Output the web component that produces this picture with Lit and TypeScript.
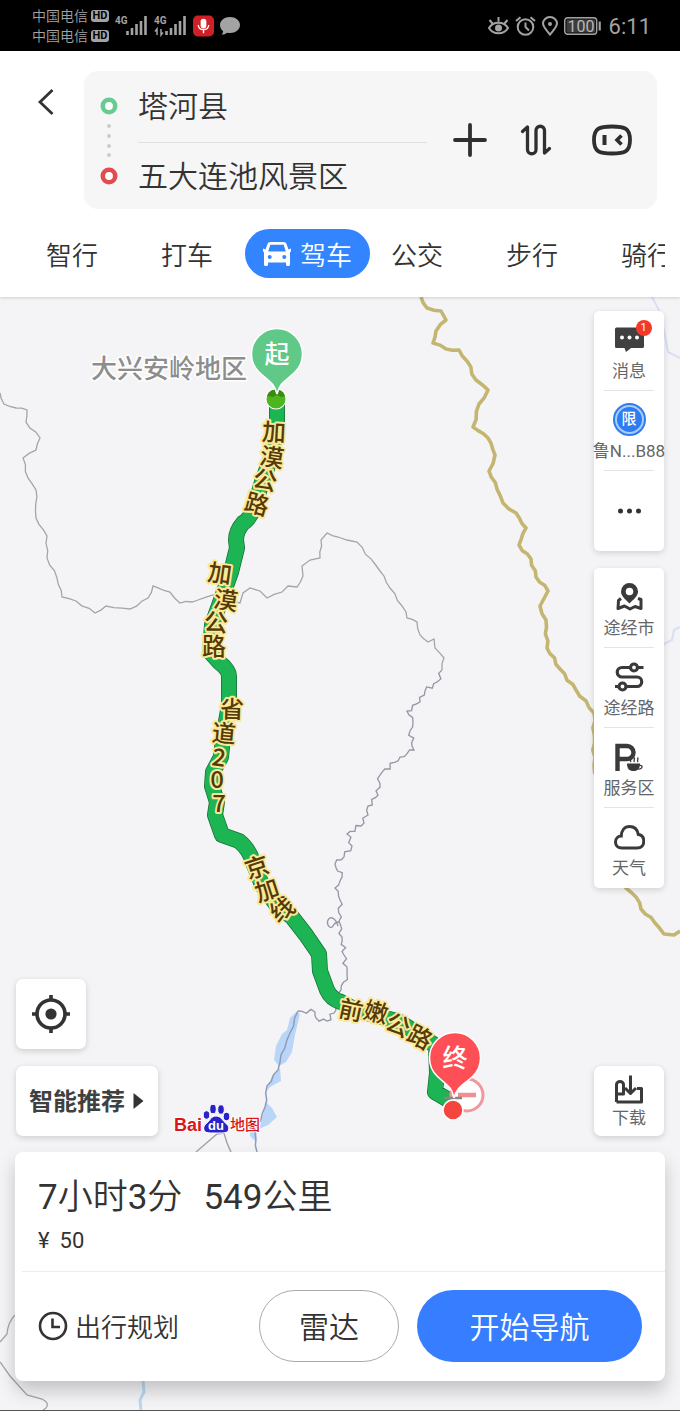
import { LitElement, html, svg, css } from "lit";
import { customElement, property, state } from "lit/decorators.js";
import { classMap } from "lit/directives/class-map.js";

type Point = [number, number];
type Glyph = [string, number, number, number];

const base = css`
  :host {
    font-family: Roboto, "Noto Sans CJK SC", sans-serif;
    color: #333;
  }
  * {
    box-sizing: border-box;
  }
  svg {
    display: block;
    flex: none;
  }
  button,
  input {
    font: inherit;
    color: inherit;
    border: 0;
    margin: 0;
    padding: 0;
    background: none;
  }
  button {
    cursor: pointer;
  }
`;

@customElement("status-bar")
class StatusBar extends LitElement {
  static styles = [
    base,
    css`
      :host {
        display: flex;
        justify-content: space-between;
        align-items: center;
        height: 51px;
        padding: 0 29px 0 32px;
        background: #000;
        color: #a3a3a3;
      }
      .side {
        display: flex;
        align-items: center;
      }
      .carrier {
        display: flex;
        align-items: center;
        gap: 3px;
        font-size: 14px;
        line-height: 20px;
        font-weight: 350;
      }
      .hd {
        background: #a3a3a3;
        color: #000;
        font-size: 11px;
        line-height: 12px;
        font-weight: 700;
        border-radius: 3px;
        width: 18px;
        text-align: center;
      }
      .time {
        font-size: 22px;
        line-height: 26px;
        padding-top: 2px;
        margin-left: 6px;
      }
      .gap {
        margin-left: 6px;
      }
      .tiny {
        font: 700 10px Roboto, sans-serif;
      }
      .level {
        font: 400 16px Roboto, sans-serif;
      }
    `,
  ];

  signal(data: boolean) {
    return svg`
      <text class="tiny" x="0" y="9" fill="#a3a3a3">4G</text>
      ${data ? svg`<path d="M3 20v-6l-2 2.500M7 14v6l2-2.500" fill="none" stroke="#a3a3a3" stroke-width="1.500"/>` : ""}
      <path d="M12.500 20v-4M17 20v-7M21.500 20v-11M26 20v-14M30.500 20V1" stroke="#a3a3a3" stroke-width="2.600"/>`;
  }

  render() {
    return html`
      <div class="side">
        <div>
          <div class="carrier">中国电信<span class="hd">HD</span></div>
          <div class="carrier">中国电信<span class="hd">HD</span></div>
        </div>
        <svg class="gap" width="33" height="22" viewBox="0 0 33 22">${this.signal(false)}</svg>
        <svg class="gap" width="33" height="22" viewBox="0 0 33 22">${this.signal(true)}</svg>
        <svg class="gap" width="21" height="22" viewBox="0 0 22 22">
          <rect width="22" height="22" rx="5" fill="#cf2027" />
          <rect x="8" y="3.500" width="6" height="10" rx="3" fill="#fff" />
          <path d="M5.500 10c.5 6.500 10.500 6.500 11 0M11 15v3.500" fill="none" stroke="#fff" stroke-width="1.400" />
        </svg>
        <svg class="gap" width="20" height="20" viewBox="0 0 20 20">
          <path d="M10 1c5.500 0 10 3.300 10 8s-4.500 8-10 8c-1 0-2 0-2.800-.3C5.600 18 3.500 18.500 1.600 18.500c1-1 1.500-2 1.500-3.400C1.200 13.700 0 11.500 0 9c0-4.700 4.500-8 10-8z" fill="#a3a3a3" />
        </svg>
      </div>
      <div class="side">
        <svg width="21" height="20" viewBox="0 0 21 20" fill="none" stroke="#a3a3a3" stroke-width="2">
          <path d="M1 12c4-7 15-7 19 0-4 7-15 7-19 0zM10.500 1v4.500M4.500 7.500l-3-3.500M16.500 7.500l3-3.500" />
          <circle cx="10.500" cy="12" r="3.500" fill="#a3a3a3" stroke="none" />
        </svg>
        <svg class="gap" width="21" height="20" viewBox="0 0 21 20" fill="none" stroke="#a3a3a3" stroke-width="2">
          <circle cx="10.500" cy="11" r="7.800" />
          <path d="M10.500 6.500V11l3.500 3.500M1 5l4.500-3.800M20 5l-4.500-3.800" />
        </svg>
        <svg class="gap" width="16" height="20" viewBox="0 0 16 20" fill="none" stroke="#a3a3a3" stroke-width="2">
          <path d="M8 18.500C3.500 13 1 10.500 1 7.500a7 6.500 0 0 1 14 0c0 3-2.500 5.500-7 11z" />
          <circle cx="8" cy="8" r="2" fill="#a3a3a3" stroke="none" />
        </svg>
        <svg class="gap" width="39" height="18" viewBox="0 0 39 18">
          <rect x=".7" y=".7" width="32" height="16.600" rx="3" fill="#111" stroke="#a3a3a3" stroke-width="1.400" />
          <rect x="2.500" y="2.500" width="28.500" height="13" rx="1" fill="#3c3c3c" />
          <text class="level" x="3.500" y="14.700" fill="#b8b8b8">100</text>
          <path d="M35.700 4.500v9" stroke="#a3a3a3" stroke-width="2.200" />
        </svg>
        <span class="time">6:11</span>
      </div>
    `;
  }
}

@customElement("route-header")
class RouteHeader extends LitElement {
  @state() mode = "驾车";

  static styles = [
    base,
    css`
      :host {
        display: block;
        position: relative;
        background: #fff;
        padding-top: 20px;
        box-shadow: 0 1px 3px rgba(0, 0, 0, 0.15);
      }
      .top {
        display: flex;
        align-items: flex-start;
        padding-right: 23px;
      }
      .back {
        width: 84px;
        padding: 17px 0 0 37px;
      }
      .box {
        flex: 1;
        min-width: 0;
        display: flex;
        align-items: center;
        background: #f6f6f6;
        border-radius: 14px;
        height: 138px;
        padding: 0 24px 0 15px;
      }
      .track {
        margin-right: 19px;
      }
      .stops {
        flex: 1;
        min-width: 0;
        align-self: flex-start;
        padding-top: 2px;
      }
      .stops input {
        display: block;
        width: 100%;
        height: 62px;
        font-size: 30px;
        font-weight: 350;
        outline: none;
      }
      .line {
        height: 1px;
        margin-top: 7px;
        background: #e0e0e0;
      }
      .icons {
        display: flex;
        align-items: center;
        margin-left: 26px;
      }
      .icons button + button {
        margin-left: 32px;
      }
      .icons button:last-child {
        margin-left: 38px;
      }
      nav {
        display: flex;
        margin: 20px 15px 0;
        overflow: hidden;
        padding-bottom: 19px;
      }
      .tab {
        flex: none;
        display: flex;
        align-items: center;
        gap: 9px;
        height: 49px;
        padding: 0 32px 0 31px;
        font-size: 26px;
        font-weight: 350;
      }
      .tab.on {
        background: #3385ff;
        color: #fff;
        border-radius: 25px;
        padding: 0 18px;
        margin-right: -10px;
      }
    `,
  ];

  render() {
    return html`
      <div class="top">
        <button class="back" aria-label="返回">
          <svg width="18" height="28" viewBox="0 0 18 28">
            <path d="M15.500 2L3 14l12.500 12" fill="none" stroke="#333" stroke-width="2.800" />
          </svg>
        </button>
        <div class="box">
          <svg class="track" width="20" height="90" viewBox="0 0 20 90" fill="none">
            <circle cx="10" cy="11" r="6.200" stroke="#66cc94" stroke-width="4.600" fill="#fff" />
            <circle cx="10" cy="81" r="6.200" stroke="#e04c4f" stroke-width="4.600" fill="#fff" />
            <g fill="#ccc">
              <circle cx="10" cy="31" r="2" /><circle cx="10" cy="41" r="2" />
              <circle cx="10" cy="51" r="2" /><circle cx="10" cy="60" r="2" />
            </g>
          </svg>
          <div class="stops">
            <input aria-label="起点" .value=${"塔河县"} />
            <div class="line"></div>
            <input aria-label="终点" .value=${"五大连池风景区"} />
          </div>
          <div class="icons">
            <button aria-label="添加途经点">
              <svg width="34" height="34" viewBox="0 0 34 34">
                <path d="M17 2v30M2 17h30" stroke="#2f2f2f" stroke-width="3.800" stroke-linecap="round" />
              </svg>
            </button>
            <button aria-label="交换起终点">
              <svg width="34" height="34" viewBox="0 0 34 34" fill="none" stroke="#2f2f2f" stroke-width="3.300" stroke-linecap="round" stroke-linejoin="round">
                <path d="M3.500 8.500l5-4.500v22.500a4.200 4.200 0 0 0 8.500 0V7.500a4.200 4.200 0 0 1 8.500 0V30l5-4.500" />
              </svg>
            </button>
            <button aria-label="语音助手">
              <svg width="42" height="32" viewBox="0 0 42 32" fill="none" stroke="#2f2f2f">
                <path d="M21 2.500c13 0 18 2 18 13.500s-5 13.500-18 13.500S3 27.500 3 16 8 2.500 21 2.500z" stroke-width="3.800" />
                <path d="M13.500 11v10" stroke-width="4" />
                <path d="M30.500 11.500L26 16l4.500 4.500" stroke-width="3.600" />
              </svg>
            </button>
          </div>
        </div>
      </div>
      <nav>
        ${["智行", "打车", "驾车", "公交", "步行", "骑行"].map(
          (name) => html`<button
            class=${classMap({ tab: true, on: name === this.mode })}
            @click=${() => (this.mode = name)}
          >
            ${name === this.mode
              ? html`<svg width="28" height="24" viewBox="0 0 28 24">
                  <path
                    d="M7.500 0h13c1.700 0 2.600.8 3.100 2.200L25.500 7.500 28 6.500v3l-1 .8V22.500c0 .9-.6 1.500-1.500 1.500h-1c-.9 0-1.500-.6-1.500-1.500V20.500H5v2c0 .9-.6 1.500-1.500 1.500h-1C1.600 24 1 23.400 1 22.500V10.300L0 9.500v-3l2.500 1 1.900-5.300C4.900.8 5.800 0 7.500 0zM7.300 2.700L5.200 9.500h17.600l-2.100-6.800zM6.700 13a2 2 0 1 0 0 4 2 2 0 0 0 0-4zm14.600 0a2 2 0 1 0 0 4 2 2 0 0 0 0-4z"
                    fill="#fff" fill-rule="evenodd" />
                </svg>`
              : ""}<span>${name}</span>
          </button>`
        )}
      </nav>
    `;
  }
}

/* Joins the points with short uneven steps, as surveyed borders look. */
function rough(points: Point[], amp: number, step = 7): string {
  let n = 0;
  let d = `M${points[0][0]} ${points[0][1]}`;
  for (let i = 1; i < points.length; i++) {
    const [x0, y0] = points[i - 1];
    const [x1, y1] = points[i];
    const len = Math.hypot(x1 - x0, y1 - y0);
    const parts = Math.max(1, Math.round(len / step));
    for (let k = 1; k <= parts; k++) {
      n++;
      const t = k / parts;
      const w = k === parts ? 0 : Math.sin(n * 2.3) * amp;
      const x = x0 + (x1 - x0) * t - ((y1 - y0) / len) * w;
      const y = y0 + (y1 - y0) * t + ((x1 - x0) / len) * w;
      d += `L${x.toFixed(1)} ${y.toFixed(1)}`;
    }
  }
  return d;
}

const WEST: Point[] = [
  [0, 393], [4, 404], [16, 408], [27, 410], [26, 422], [40, 438], [36, 450], [23, 458], [28, 478], [36, 490],
  [36, 518], [47, 536], [47, 558], [57, 578], [62, 597], [76, 601], [95, 613], [106, 606], [130, 609],
  [148, 598], [153, 586], [170, 592], [180, 603], [198, 600], [213, 595], [240, 603], [243, 593], [250, 588],
  [260, 591], [267, 598], [282, 592], [288, 586], [297, 587], [303, 576], [302, 566], [310, 560], [320, 558],
  [321, 540], [327, 533], [338, 537], [347, 540], [357, 542], [380, 571], [390, 588], [406, 612], [407, 618],
  [417, 622], [420, 635], [428, 642], [434, 639], [435, 648], [444, 658], [442, 670],
];
const EAST: Point[] = [
  [442, 670], [437, 682], [425, 691], [420, 702], [407, 711], [413, 722], [410, 731], [414, 750], [400, 757],
  [380, 775], [378, 795], [368, 806], [364, 823], [347, 834], [352, 846], [344, 857], [335, 864], [342, 877],
  [335, 888], [340, 900], [339, 921], [342, 937], [344, 955], [347, 975], [341, 990], [336, 1010], [327, 1021],
  [316, 1018], [315, 1012], [298, 1011],
];
const RIVER: Point[] = [
  [298, 1011], [290, 1033], [281, 1055], [278, 1070], [267, 1086], [265, 1107], [255, 1133], [257, 1152],
];
const GOLD: Point[] = [
  [421, 297], [427, 308], [441, 311], [446, 320], [436, 331], [433, 343], [446, 349], [459, 350], [467, 361],
  [476, 380], [488, 390], [479, 404], [473, 427], [488, 438], [495, 455], [489, 471], [497, 489], [503, 503],
  [516, 513], [526, 528], [519, 545], [531, 559], [536, 577], [548, 591], [540, 606], [546, 620], [547, 648],
  [560, 669], [576, 690], [594, 713], [594, 765], [610, 850], [626, 888], [636, 897], [641, 909], [655, 923],
  [664, 934], [674, 935], [680, 931],
];
const ROUTE =
  "M277 402L277 424L272 455L262 482L254 508Q249 520 243 523Q236 531 236 540L237 548L231 572L221 600L212 625L210 652L219 662Q229 670 229 676L229 705L223 738L221 757L213 772L212 786L217 802L215 815L222 835L239 841Q249 849 253 862L262 885L278 907L292 917L306 935L319 954L320 971L327 990Q331 999 341 1002L356 1010L400 1022L436 1046L437 1073L435 1092L452 1102";

const ROADS: Glyph[] = [
  ["加", 274, 432, 3], ["漠", 272, 457, 9], ["公", 265, 480, 12], ["路", 257, 504, 16],
  ["加", 220, 573, 8], ["漠", 226, 600, 8], ["公", 216, 622, 5], ["路", 214, 646, 0],
  ["省", 232, 709, 2], ["道", 224, 733, 5], ["2", 219, 757, 8], ["0", 217, 779, 0], ["7", 219, 803, 0],
  ["京", 257, 867, -18], ["加", 267, 890, -18], ["线", 282, 909, -35],
  ["前", 351, 1010, 12], ["嫩", 376, 1012, 14], ["公", 398, 1025, 24], ["路", 420, 1037, 28],
];

@customElement("route-map")
class RouteMap extends LitElement {
  static styles = [
    base,
    css`
      :host {
        display: block;
      }
      .canvas {
        width: 100%;
        height: 100%;
      }
      text {
        font-family: "Noto Sans CJK SC", sans-serif;
        text-anchor: middle;
      }
      .road {
        font-size: 24px;
        font-weight: 500;
        fill: #553a08;
        stroke: #fbe99a;
        stroke-width: 4px;
        stroke-linejoin: round;
        paint-order: stroke;
      }
      .region {
        font-size: 26px;
        font-weight: 500;
        fill: #8d8d8d;
        stroke: #fff;
        stroke-width: 3px;
        paint-order: stroke;
      }
      .pin {
        font-size: 25px;
        font-weight: 500;
        fill: #fff;
      }
      .brand {
        font: 700 18px "Liberation Sans", sans-serif;
        fill: #d8161b;
        text-anchor: start;
        stroke: #fff;
        stroke-width: 2px;
        paint-order: stroke;
      }
      .brand.du {
        font-size: 13px;
        fill: #fff;
        stroke: none;
      }
      .brand.cn {
        font: 500 15px "Noto Sans CJK SC", sans-serif;
      }
    `,
  ];

  render() {
    return html`
      <svg class="canvas" viewBox="0 297 680 1114" preserveAspectRatio="xMidYMin slice" role="img" aria-label="路线地图" fill="none">
        <g fill="#b9d6f8">
          <path d="M296 1012L300 1014L295 1035L292 1052L286 1062L279 1066L274 1060L276 1046L282 1034L287 1030L290 1018z" />
          <path d="M266 1102L272 1108L277 1117L268 1125L261 1128L257 1132L256 1142L250 1136L250 1130L259 1128L264 1112z" />
          <path d="M272 1076L280 1068L281 1081L270 1087L266 1092z" />
        </g>
        <g stroke="#d9dff3" stroke-width="2">
          <path d="M652 297L660 312L664 330L668 352L680 358" />
          <path d="M658 646L664 644L672 640L674 630L680 627" />
          <path d="M143 1381L144 1392L140 1400L141 1411" stroke="#b9d9f3" stroke-width="3" />
        </g>
        <path d="${rough(WEST, 1)}" stroke="#a3a5ab" stroke-width="1.300" />
        <path d="${rough(EAST, 2.4, 4)}" stroke="#9296a5" stroke-width="1.300" />
        <path d="${rough(RIVER, 1)}" stroke="#8f9cb8" stroke-width="1.500" />
        <path d="M338 926C336 919 331 915 328 920C326 925 331 930 333 926C335 922 337 922 339 922" stroke="#9296a5" stroke-width="1.400" />
        <path d="M196 1152L217 1134L224 1133L227 1143L231 1152" stroke="#a3a5ab" stroke-width="1.500" />
        <path d="M15 1315Q8 1322 7 1334L0 1342M0 1362L10 1376L27 1395L42 1399Q50 1403 46 1408L42 1411" stroke="#a3a5ab" stroke-width="1.300" />
        <path d="${rough(GOLD, 1.2)}" stroke="#c4b672" stroke-width="3.600" stroke-linejoin="round" />

        <path d="${ROUTE}" stroke="#17703a" stroke-width="16" stroke-linejoin="round" />
        <path d="${ROUTE}" stroke="#1db454" stroke-width="14.500" stroke-linejoin="round" />
        ${ROADS.map(
          ([ch, x, y, r]) =>
            svg`<text class="road" transform="translate(${x} ${y}) rotate(${r})" y="9">${ch}</text>`
        )}
        <text class="region" x="169" y="378">大兴安岭地区</text>

        <circle cx="276" cy="399" r="10.500" fill="#fff" />
        <circle cx="276" cy="399" r="9.500" fill="#4db51d" />
        <path d="M267 396a9.500 9.500 0 0 1 18 0l-4 1-4-2-4 2z" fill="#3c8a12" />
        <path d="M277 394C274 382 268 381 259 372a25.500 25.500 0 1 1 36 0C286 381 280 382 277 394z" fill="#60c987" stroke="#fff" stroke-width="1.500" />
        <text class="pin" x="277" y="363">起</text>

        <circle cx="467" cy="1095" r="16" fill="#fff" stroke="#f0989b" stroke-width="3" />
        <path d="M458 1095h18" stroke="#ef8f93" stroke-width="4.500" />
        <path d="M444 1098h18" stroke="#8a8580" stroke-width="2.500" />
        <path d="M454 1098C452 1086 446 1085 437 1076a25.500 25.500 0 1 1 36 0C464 1085 457 1086 454 1098z" fill="#ff4f56" stroke="#fff" stroke-width="1.500" />
        <text class="pin" x="455" y="1067">终</text>
        <circle cx="453" cy="1110" r="10" fill="#f4453f" stroke="#fff" stroke-width="1.500" />

        <text class="brand" x="174" y="1131">Bai</text>
        <g fill="#2a22c8" stroke="#fff" stroke-width="1">
          <path d="M216 1116c5 0 6 4 9 6.500s4.500 4.500 3.500 7.500-4 3-12.500 3-11 0-12-3 .500-5 3.500-7.500 3.500-6.500 8.500-6.500z" />
          <ellipse cx="206.500" cy="1115" rx="3.300" ry="4.200" />
          <ellipse cx="213" cy="1109" rx="3.300" ry="4.700" />
          <ellipse cx="221" cy="1109.500" rx="3.300" ry="4.700" />
          <ellipse cx="226.500" cy="1116.500" rx="3.300" ry="4.200" />
        </g>
        <text class="brand du" x="208" y="1130">du</text>
        <text class="brand cn" x="230" y="1130">地图</text>
      </svg>
    `;
  }
}

const ICONS: Record<string, unknown> = {
  message: svg`
    <path d="M1 4a1.500 1.500 0 0 1 1.500-1.500h26A1.500 1.500 0 0 1 30 4V21.500a1.500 1.500 0 0 1-1.500 1.500H17l-5 4-1.500-4H2.500A1.500 1.500 0 0 1 1 21.500z" fill="#404040"/>
    <g fill="#fff"><circle cx="8" cy="12.500" r="2"/><circle cx="15.500" cy="12.500" r="2"/><circle cx="23" cy="12.500" r="2"/></g>`,
  more: svg`<g fill="#333"><circle cx="6.500" cy="15" r="2.500"/><circle cx="15.500" cy="15" r="2.500"/><circle cx="24.500" cy="15" r="2.500"/></g>`,
  city: svg`
    <path d="M15.500 1a8.500 8.500 0 0 1 8.500 8.500c0 4.500-4.500 8-8.500 12-4-4-8.500-7.500-8.500-12A8.500 8.500 0 0 1 15.500 1zm0 4.700a3.800 3.800 0 1 0 0 7.600 3.800 3.800 0 0 0 0-7.600z" fill="#3a3a3a" fill-rule="evenodd"/>
    <path d="M7 16.500l-2.500 2-.5 8 6.500-2.500 5.500 3 5-2.500 6 2V17.500l-3-1" fill="none" stroke="#3a3a3a" stroke-width="3" stroke-linejoin="round"/>`,
  road: svg`<g fill="none" stroke="#3a3a3a" stroke-width="3.200">
    <path d="M17 5.500H8a4.700 4.700 0 0 0 0 9.500h15a4.700 4.700 0 0 1 0 9.500H12M1 24.500h5M24 5.500h5.500"/>
    <circle cx="20" cy="5.500" r="3.500"/><circle cx="8.500" cy="24.500" r="3.500"/></g>`,
  service: svg`
    <path d="M3.500 29V4h9.500a6.500 6.500 0 0 1 0 13H4" fill="none" stroke="#3a3a3a" stroke-width="4.400"/>
    <path d="M13 21.500h13c0 5-2 7.500-6.500 7.500S13 26.500 13 21.500z" fill="#3a3a3a"/>
    <path d="M25.500 23.500c4-1 3 4-1 3.500M17 20c-1.500-2 1-2.500-.5-4.500M20.500 20c-1.500-2 1-2.500-.5-4.500M24 20c-1.500-2 1-2.500-.5-4.500" fill="none" stroke="#3a3a3a" stroke-width="1.300"/>`,
  weather: svg`<path d="M8 26C3.500 26 1.500 23.200 1.500 20c0-3.500 2.500-6 5.800-6C7.500 8.500 10.500 4.500 15.500 4.500s8 3 8.800 8c3.700.5 5.500 3.500 5.500 6.700 0 4-2.500 6.800-6.800 6.800z" fill="none" stroke="#3a3a3a" stroke-width="3"/>`,
  download: svg`<g fill="none" stroke="#3a3a3a" stroke-width="3" stroke-linejoin="round">
    <path d="M3.500 28V10.500a3.500 3 0 0 1 7 0V20H3.500M3.500 28h25V14.500H24"/>
    <path d="M17.500 1.500V19M12 14l5.500 5.500L23 14"/></g>`,
};

@customElement("rail-item")
class RailItem extends LitElement {
  @property() icon = "";
  @property() label = "";
  @property() badge = "";

  static styles = [
    base,
    css`
      :host {
        display: block;
      }
      button {
        display: flex;
        flex-direction: column;
        align-items: center;
        width: 100%;
        height: 79px;
        padding-top: 14px;
        gap: 6px;
        font-size: 17px;
        line-height: 20px;
        color: #666;
        white-space: nowrap;
      }
      button.bare {
        justify-content: center;
        padding-top: 0;
      }
      .figure {
        position: relative;
      }
      .badge {
        position: absolute;
        top: -5px;
        right: -7px;
        width: 16px;
        height: 16px;
        border-radius: 50%;
        background: #f5382c;
        color: #fff;
        font-size: 11px;
        line-height: 16px;
        text-align: center;
      }
      .limit {
        display: block;
        width: 33px;
        height: 33px;
        margin: -2px 0 -1px;
        border-radius: 50%;
        border: 2px solid #2e7df0;
        outline: 2px solid #a9cdfb;
        outline-offset: -4px;
        background: #2e7df0;
        color: #fff;
        font-size: 15px;
        line-height: 28px;
        font-weight: 500;
        text-align: center;
      }
    `,
  ];

  render() {
    return html`<button class=${this.label ? "" : "bare"} aria-label=${this.label || "更多"}>
      <span class="figure">
        ${this.icon === "limit"
          ? html`<span class="limit">限</span>`
          : html`<svg width="31" height="30" viewBox="0 0 31 30">${ICONS[this.icon]}</svg>`}
        ${this.badge ? html`<span class="badge">${this.badge}</span>` : ""}
      </span>
      ${this.label ? html`<span>${this.label}</span>` : ""}
    </button>`;
  }
}

@customElement("trip-sheet")
class TripSheet extends LitElement {
  static styles = [
    base,
    css`
      :host {
        display: block;
        background: #fff;
        border-radius: 8px;
        box-shadow: 0 10px 18px rgba(0, 0, 0, 0.2);
      }
      .info {
        padding: 26px 23px 17px;
      }
      h1 {
        margin: 0;
        font-size: 35px;
        line-height: 40px;
        font-weight: 350;
        display: flex;
        flex-wrap: wrap;
        gap: 21px;
      }
      .num {
        font-weight: 400;
      }
      .price {
        margin: 10px 0 0;
        font-size: 22px;
        line-height: 26px;
        display: flex;
        gap: 10px;
      }
      .actions {
        display: flex;
        align-items: center;
        gap: 18px;
        margin: 0 0 0 7px;
        padding: 18px 23px 19px 16px;
        border-top: 1px solid #ececec;
      }
      .plan {
        flex: 1;
        display: flex;
        align-items: center;
        gap: 7px;
        color: #333;
        text-decoration: none;
        font-size: 26px;
        line-height: 32px;
        font-weight: 350;
        white-space: nowrap;
      }
      .plan span {
        padding-top: 3px;
      }
      .pill {
        height: 72px;
        border-radius: 36px;
        font-size: 30px;
        line-height: 36px;
        padding-top: 3px;
        font-weight: 350;
      }
      .radar {
        width: 140px;
        border: 1px solid #aaa;
      }
      .go {
        width: 225px;
        background: #367dff;
        color: #fff;
      }
    `,
  ];

  render() {
    return html`
      <div class="info">
        <h1>
          <span><span class="num">7</span>小时<span class="num">3</span>分</span>
          <span><span class="num">549</span>公里</span>
        </h1>
        <p class="price"><span>¥</span><span>50</span></p>
      </div>
      <div class="actions">
        <a class="plan" href="#plan">
          <svg width="30" height="30" viewBox="0 0 30 30" fill="none" stroke="#333" stroke-width="2.600">
            <circle cx="15" cy="15" r="13" />
            <path d="M14.500 7.500V16H22" />
          </svg>
          <span>出行规划</span>
        </a>
        <button class="pill radar">雷达</button>
        <button class="pill go">开始导航</button>
      </div>
    `;
  }
}

@customElement("app-root")
class AppRoot extends LitElement {
  static styles = [
    base,
    css`
      :host {
        display: flex;
        flex-direction: column;
        min-height: 100vh;
        background: #f4f4f6;
      }
      route-header {
        z-index: 1;
      }
      main {
        position: relative;
        flex: 1;
        display: flex;
        flex-direction: column;
        padding: 14px 15px 29px;
        border-bottom: 1px solid #555;
      }
      route-map {
        position: absolute;
        inset: 0;
        overflow: hidden;
      }
      .over {
        position: relative;
      }
      .rail {
        align-self: flex-end;
        width: 70px;
        margin: 0 1px 17px 0;
        background: #fff;
        border-radius: 5px;
        box-shadow: 0 2px 6px rgba(0, 0, 0, 0.14);
      }
      .rule {
        height: 1px;
        margin: 0 10px;
        background: #e4e4e4;
      }
      .rail rail-item:last-child {
        padding-bottom: 1px;
      }
      .tools {
        margin-top: auto;
        display: flex;
        justify-content: space-between;
        align-items: flex-end;
        padding: 0 1px 16px;
      }
      .left {
        display: flex;
        flex-direction: column;
        align-items: flex-start;
        gap: 17px;
      }
      .card {
        display: flex;
        align-items: center;
        justify-content: center;
        height: 70px;
        min-width: 70px;
        background: #fff;
        border-radius: 7px;
        box-shadow: 0 2px 6px rgba(0, 0, 0, 0.16);
      }
      .smart {
        gap: 8px;
        padding: 0 14px 0 13px;
        font-size: 24px;
        line-height: 30px;
        font-weight: 700;
        color: #404040;
      }
      .smart span {
        padding-top: 2px;
      }
      .save {
        flex-direction: column;
        gap: 3px;
        font-size: 17px;
        line-height: 20px;
        color: #666;
      }
    `,
  ];

  render() {
    return html`
      <status-bar></status-bar>
      <route-header></route-header>
      <main>
        <route-map></route-map>
        <div class="rail over">
          <rail-item icon="message" label="消息" badge="1"></rail-item>
          <div class="rule"></div>
          <rail-item icon="limit" label="鲁N...B88"></rail-item>
          <div class="rule"></div>
          <rail-item icon="more"></rail-item>
        </div>
        <div class="rail over">
          <rail-item icon="city" label="途经市"></rail-item>
          <div class="rule"></div>
          <rail-item icon="road" label="途经路"></rail-item>
          <div class="rule"></div>
          <rail-item icon="service" label="服务区"></rail-item>
          <div class="rule"></div>
          <rail-item icon="weather" label="天气"></rail-item>
        </div>
        <div class="tools over">
          <div class="left">
            <button class="card" aria-label="定位">
              <svg width="38" height="38" viewBox="0 0 38 38" fill="none" stroke="#333">
                <circle cx="19" cy="19" r="14" stroke-width="3.600" />
                <path d="M19 0v6M19 32v6M0 19h6M32 19h6" stroke-width="3.600" />
                <circle cx="19" cy="19" r="5.600" fill="#333" stroke="none" />
              </svg>
            </button>
            <button class="card smart">
              <span>智能推荐</span>
              <svg width="11" height="16" viewBox="0 0 10 16"><path d="M0 0l10 8-10 8z" fill="#333" /></svg>
            </button>
          </div>
          <button class="card save">
            <svg width="32" height="31" viewBox="0 0 32 31">${ICONS.download}</svg>
            下载
          </button>
        </div>
        <trip-sheet class="over"></trip-sheet>
      </main>
    `;
  }
}
